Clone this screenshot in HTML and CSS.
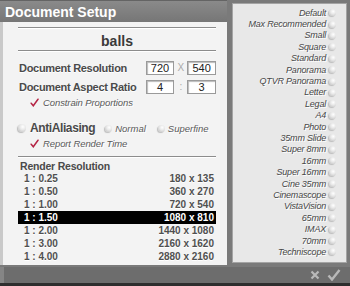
FILE: index.html
```html
<!DOCTYPE html>
<html lang="en">
<head>
  <meta charset="UTF-8">
  <title>Document Setup</title>
  <link rel="stylesheet" href="styles.css">
</head>
<body>

<div class="app">
  <div class="main">

    <!-- Setup column -->
    <div class="setup">
      <div class="title">Document Setup</div>
      <div class="panel">
        <div class="rule"></div>
        <div class="doc-name">balls</div>
        <div class="rule"></div>

        <div class="field first">
          <span class="label">Document Resolution</span>
          <span class="box">720</span>
          <span class="sep">X</span>
          <span class="box">540</span>
        </div>
        <div class="field second">
          <span class="label">Document Aspect Ratio</span>
          <span class="box">4</span>
          <span class="sep">:</span>
          <span class="box">3</span>
        </div>
        <div class="check">
          <svg class="tick" width="9" height="9" viewBox="0 0 9 9"><path d="M1.2 5.2 L3.3 7.8 L8 1.2" fill="none" stroke="#b52444" stroke-width="1.5" stroke-linecap="round"/></svg>
          <span>Constrain Proportions</span>
        </div>

        <div class="aa">
          <span class="radio big"></span>
          <span class="aa-label">AntiAliasing</span>
          <span class="radio"></span>
          <span class="opt">Normal</span>
          <span class="radio"></span>
          <span class="opt">Superfine</span>
        </div>
        <div class="check report">
          <svg class="tick" width="9" height="9" viewBox="0 0 9 9"><path d="M1.2 5.2 L3.3 7.8 L8 1.2" fill="none" stroke="#b52444" stroke-width="1.5" stroke-linecap="round"/></svg>
          <span>Report Render Time</span>
        </div>

        <div class="rule low"></div>
        <div class="res-title">Render Resolution</div>
        <div class="res-list">
          <div class="res-row"><span>1 : 0.25</span><span>180 x 135</span></div>
          <div class="res-row"><span>1 : 0.50</span><span>360 x 270</span></div>
          <div class="res-row"><span>1 : 1.00</span><span>720 x 540</span></div>
          <div class="res-row selected"><span>1 : 1.50</span><span>1080 x 810</span></div>
          <div class="res-row"><span>1 : 2.00</span><span>1440 x 1080</span></div>
          <div class="res-row"><span>1 : 3.00</span><span>2160 x 1620</span></div>
          <div class="res-row"><span>1 : 4.00</span><span>2880 x 2160</span></div>
        </div>
      </div>
    </div>

    <!-- Presets column -->
    <div class="presets">
      <div class="preset"><span>Default</span><span class="radio"></span></div>
      <div class="preset"><span>Max Recommended</span><span class="radio"></span></div>
      <div class="preset"><span>Small</span><span class="radio"></span></div>
      <div class="preset"><span>Square</span><span class="radio"></span></div>
      <div class="preset"><span>Standard</span><span class="radio"></span></div>
      <div class="preset"><span>Panorama</span><span class="radio"></span></div>
      <div class="preset"><span>QTVR Panorama</span><span class="radio"></span></div>
      <div class="preset"><span>Letter</span><span class="radio"></span></div>
      <div class="preset"><span>Legal</span><span class="radio"></span></div>
      <div class="preset"><span>A4</span><span class="radio"></span></div>
      <div class="preset"><span>Photo</span><span class="radio"></span></div>
      <div class="preset"><span>35mm Slide</span><span class="radio"></span></div>
      <div class="preset"><span>Super 8mm</span><span class="radio"></span></div>
      <div class="preset"><span>16mm</span><span class="radio"></span></div>
      <div class="preset"><span>Super 16mm</span><span class="radio"></span></div>
      <div class="preset"><span>Cine 35mm</span><span class="radio"></span></div>
      <div class="preset"><span>Cinemascope</span><span class="radio"></span></div>
      <div class="preset"><span>VistaVision</span><span class="radio"></span></div>
      <div class="preset"><span>65mm</span><span class="radio"></span></div>
      <div class="preset"><span>IMAX</span><span class="radio"></span></div>
      <div class="preset"><span>70mm</span><span class="radio"></span></div>
      <div class="preset"><span>Techniscope</span><span class="radio"></span></div>
    </div>
  </div>

  <!-- Bottom bar -->
  <div class="bottombar">
    <svg width="10" height="10" viewBox="0 0 10 10"><path d="M1.5 1.5 L8.5 8.5 M8.5 1.5 L1.5 8.5" stroke="#b9b9b9" stroke-width="2.2"/></svg>
    <svg width="14" height="12" viewBox="0 0 14 12"><path d="M1.5 6.5 L5 10.5 L12.5 1" fill="none" stroke="#b9b9b9" stroke-width="2.4"/></svg>
  </div>
  <div class="strip"></div>
</div>

</body>
</html>
```

FILE: styles.css
```css
body {
  margin: 0;
  background: #3a3a3a;
  font-family: "Liberation Sans", Arial, sans-serif;
}
.app {
  width: 350px;
  height: 286px;
  display: flex;
  flex-direction: column;
  background: #7a7a7a;
}
.main {
  display: flex;
  height: 267px;
}

/* Left column */
.setup {
  width: 227px;
  display: flex;
  flex-direction: column;
}
.title {
  height: 22px;
  line-height: 22px;
  padding-left: 5px;
  color: #fff;
  font-size: 14px;
  font-weight: bold;
  background: linear-gradient(#8a8a8a, #767676);
  border-top: 1px solid #646464;
  box-sizing: border-box;
}
.panel {
  height: 243px;
  box-sizing: border-box;
  padding: 5px 11px 0 15px;
  background: #f3f3f3;
  border-left: 3px solid #c9c9c9;
}
.rule {
  height: 0;
  border-top: 1px solid #8c8c8c;
  border-bottom: 1px solid #fff;
}
.rule.low {
  margin-top: 7px;
}
.doc-name {
  height: 21px;
  line-height: 24px;
  text-align: center;
  font-size: 14px;
  font-weight: bold;
  color: #3a3a3a;
}
.field {
  display: flex;
  align-items: center;
  height: 13px;
}
.field.first {
  margin-top: 9px;
}
.field.second {
  margin-top: 6px;
}
.label {
  width: 128px;
  padding-left: 1px;
  font-size: 11px;
  font-weight: bold;
  letter-spacing: -0.3px;
  color: #4a4a4a;
  text-shadow: 0 1px 0 #fff;
}
.box {
  width: 27px;
  height: 12px;
  line-height: 12px;
  text-align: center;
  font-size: 11px;
  color: #222;
  background: #fff;
  border: 1px solid #9a9a9a;
  box-shadow: inset 1px 1px 1px #bbb;
}
.sep {
  width: 13px;
  text-align: center;
  font-size: 10px;
  color: #aaa;
}
.check {
  display: flex;
  align-items: center;
  height: 12px;
  margin-top: 3px;
  padding-left: 12px;
  font-size: 9.5px;
  font-style: italic;
  color: #5a5a5a;
  letter-spacing: -0.1px;
  text-shadow: 1px 1px 0 #fff;
}
.check.report {
  margin-top: 3px;
}
.tick {
  margin-right: 4px;
}
.aa {
  display: flex;
  align-items: center;
  height: 12px;
  margin-top: 14px;
}
.aa-label {
  margin: 0 10px 0 4px;
  font-size: 12px;
  font-weight: bold;
  letter-spacing: -0.4px;
  color: #4a4a4a;
  text-shadow: 0 1px 0 #fff;
}
.opt {
  margin: 0 12px 0 3px;
  font-size: 9.5px;
  font-style: italic;
  color: #5a5a5a;
  text-shadow: 1px 1px 0 #fff;
}
.radio {
  width: 7px;
  height: 7px;
  border-radius: 50%;
  background: radial-gradient(circle at 60% 35%, #fff 0%, #e6e6e6 45%, #b8b8b8 100%);
  box-shadow: -1px 1px 1px #bcbcbc;
  flex: none;
}
.radio.big {
  width: 8px;
  height: 8px;
}
.res-title {
  height: 13px;
  line-height: 14px;
  margin-top: 1px;
  padding-left: 2px;
  font-size: 10.5px;
  font-weight: bold;
  letter-spacing: -0.2px;
  color: #4a4a4a;
}
.res-row {
  display: flex;
  justify-content: space-between;
  height: 13px;
  line-height: 13px;
  padding: 0 2px 0 6px;
  font-size: 10px;
  font-weight: bold;
  color: #505050;
  text-shadow: 0 1px 0 #fff;
}
.res-row.selected {
  background: #000;
  color: #fff;
  text-shadow: none;
}

/* Right column */
.presets {
  width: 115px;
  height: 260px;
  box-sizing: border-box;
  margin: 3px 0 0 5px;
  padding-top: 3px;
  padding-right: 10px;
  background: #e8e8e8;
  border: 1px solid #a4a4a4;
}
.preset {
  display: flex;
  justify-content: flex-end;
  align-items: center;
  gap: 3px;
  height: 11.4px;
  font-size: 9px;
  font-style: italic;
  letter-spacing: -0.2px;
  color: #474747;
  text-shadow: 1px 1px 0 #fff;
}

/* Bottom */
.bottombar {
  height: 16px;
  display: flex;
  justify-content: flex-end;
  align-items: center;
  gap: 7px;
  padding-right: 9px;
  background: #6d6d6d;
  border-left: 4px solid #858585;
}
.strip {
  flex: 1;
  background: #2e2e2e;
}
```
